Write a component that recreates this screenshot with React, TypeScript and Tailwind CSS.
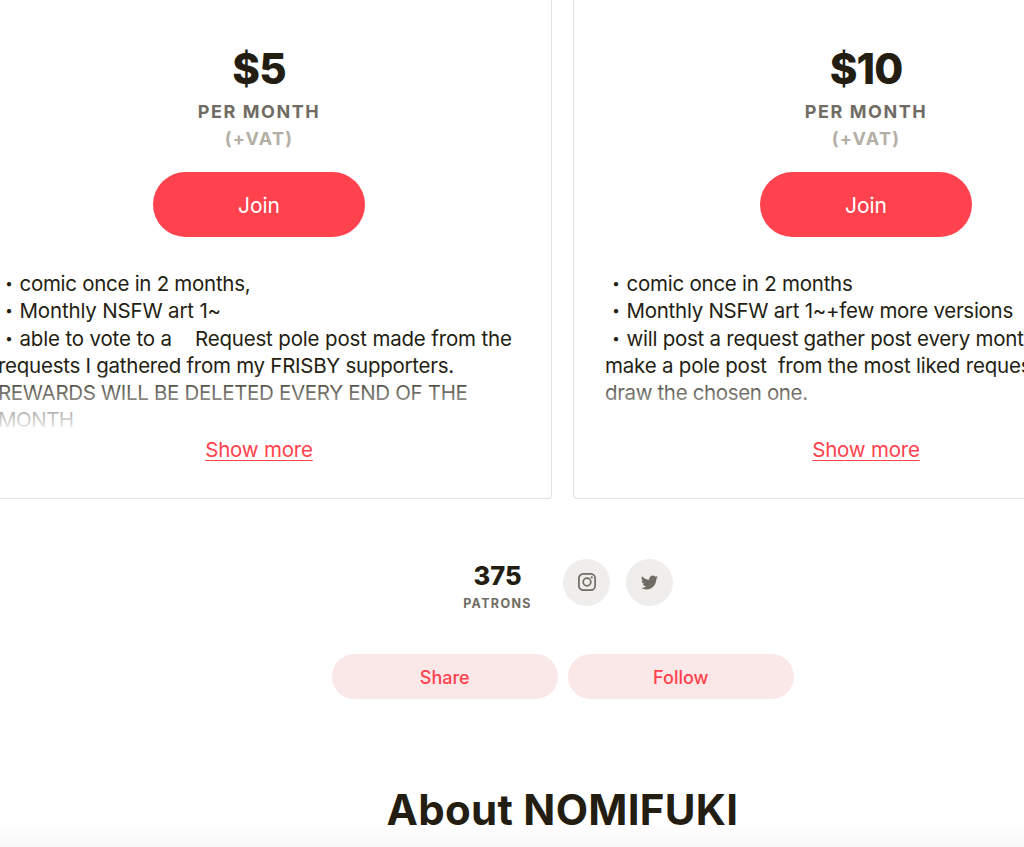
import React from "react";

type Line = {
	text: string;
	bullet?: boolean;
	className?: string;
};

type TierProps = {
	price: string;
	lines: Line[];
};

const leftLines: Line[] = [
	{ text: "comic once in 2 months,", bullet: true, className: "tracking-[-0.28px]" },
	{ text: "Monthly NSFW art 1~", bullet: true, className: "tracking-[-0.17px]" },
	{
		text: "able to vote to a    Request pole post made from the",
		bullet: true,
		className: "tracking-[-0.2px] [word-spacing:0.2px]",
	},
	{ text: "requests I gathered from my FRISBY supporters.", className: "tracking-[-0.26px]" },
	{ text: "REWARDS WILL BE DELETED EVERY END OF THE", className: "tracking-[-0.33px]" },
	{ text: "MONTH", className: "tracking-[-0.5px]" },
];

const rightLines: Line[] = [
	{ text: "comic once in 2 months", bullet: true, className: "tracking-[-0.24px]" },
	{ text: "Monthly NSFW art 1~+few more versions", bullet: true, className: "tracking-[-0.27px]" },
	{ text: "will post a request gather post every month and", bullet: true, className: "tracking-[-0.25px]" },
	{ text: "make a pole post  from the most liked requests and", className: "tracking-[-0.21px]" },
	{ text: "draw the chosen one.", className: "tracking-[-0.36px]" },
];

const Tier = ({ price, lines }: TierProps) => {
	return (
		<div className="flex h-[499px] w-[586px] shrink-0 flex-col items-center rounded-b-[4px] border border-t-0 border-[#e3e2de] px-[31px] pt-[41px]">
			<div className="text-[42px] leading-[55px] font-extrabold tracking-[-0.9px]">{price}</div>
			<div className="mt-[2px] text-[18px] leading-[27px] font-bold tracking-[1.55px] text-[#706c64]">
				PER MONTH
			</div>
			<div className="text-[18px] leading-[27px] font-bold tracking-[1.3px] text-[#b3afa6]">(+VAT)</div>
			<button className="mt-[20px] h-[65px] w-[212px] shrink-0 rounded-full bg-[#ff424d] pt-[3px] text-[21px] text-white">
				Join
			</button>
			<div className="relative mt-[33px] h-[164px] w-full shrink-0 text-[20.5px] leading-[27.3px] text-[#241e12]">
				{lines.map((line) => (
					<div key={line.text} className="flex whitespace-pre">
						{line.bullet && (
							<span className="w-[21.5px] shrink-0 pl-px font-['Noto_Sans_CJK_JP',sans-serif] text-[20px]">
								・
							</span>
						)}
						<span className={line.className}>{line.text}</span>
					</div>
				))}
				<div className="absolute inset-x-0 bottom-0 h-[64px] bg-linear-to-t from-white to-white/0" />
			</div>
			<a className="mt-px text-[20.5px] leading-[30px] tracking-[-0.2px] text-[#ff424d] underline decoration-1 underline-offset-[3px]">
				Show more
			</a>
		</div>
	);
};

const InstagramIcon = () => (
	<svg width="18" height="18" viewBox="0 0 18 18" fill="none" stroke="#706c64" strokeWidth="1.7">
		<rect x="0.9" y="0.9" width="16.2" height="16.2" rx="4.4" />
		<circle cx="9" cy="9" r="3.8" />
		<circle cx="13.7" cy="4.4" r="1.1" fill="#706c64" stroke="none" />
	</svg>
);

const TwitterIcon = () => (
	<svg width="17" height="17" viewBox="0 0 24 24" fill="#706c64">
		<path d="M23.95 4.57a10 10 0 0 1-2.82.77 4.96 4.96 0 0 0 2.16-2.72c-.95.55-2 .95-3.13 1.18a4.92 4.92 0 0 0-8.38 4.48C7.69 8.1 4.07 6.13 1.64 3.16a4.92 4.92 0 0 0 1.52 6.57 4.9 4.9 0 0 1-2.23-.61v.06a4.92 4.92 0 0 0 3.95 4.83 5 5 0 0 1-2.21.08 4.94 4.94 0 0 0 4.6 3.42A9.87 9.87 0 0 1 0 19.54a14 14 0 0 0 7.55 2.21c9.05 0 14-7.5 14-13.98 0-.21 0-.42-.02-.63a9.94 9.94 0 0 0 2.42-2.57z" />
	</svg>
);

const App = () => {
	return (
		<div className="relative h-[847px] w-[1024px] overflow-hidden bg-white font-[Inter,sans-serif] text-[#241e12]">
			<div className="-ml-[34px] flex w-[1194px] gap-[21px]">
				<Tier price="$5" lines={leftLines} />
				<Tier price="$10" lines={rightLines} />
			</div>
			<div className="mt-[60px] flex h-[46px] items-center pl-[463px]">
				<div className="flex w-[69px] flex-col items-center pt-[12px]">
					<span className="text-[25.5px] leading-[30px] font-extrabold">375</span>
					<span className="text-[12.5px] leading-[25px] font-bold tracking-[1.35px] text-[#706c64]">PATRONS</span>
				</div>
				<div className="ml-[31px] flex gap-[16px]">
					<a className="flex size-[47px] items-center justify-center rounded-full bg-[#efeeec]">
						<InstagramIcon />
					</a>
					<a className="flex size-[47px] items-center justify-center rounded-full bg-[#efeeec]">
						<TwitterIcon />
					</a>
				</div>
			</div>
			<div className="mt-[49px] flex gap-[10.5px] pl-[332px] text-[18px] font-medium text-[#ff424d]">
				<button className="h-[45px] w-[225.5px] rounded-full bg-[#fae7e7] pt-[2px]">Share</button>
				<button className="h-[45px] w-[225.5px] rounded-full bg-[#fae7e7] pt-[2px]">Follow</button>
			</div>
			<h1 className="mt-[81px] pl-[386.5px] text-[42px] leading-[60px] font-bold tracking-[0.3px] whitespace-nowrap">
				About NOMIFUKI
			</h1>
			<div className="absolute inset-x-0 bottom-0 h-[24px] bg-linear-to-t from-black/3 to-black/0" />
		</div>
	);
};

export default App;
